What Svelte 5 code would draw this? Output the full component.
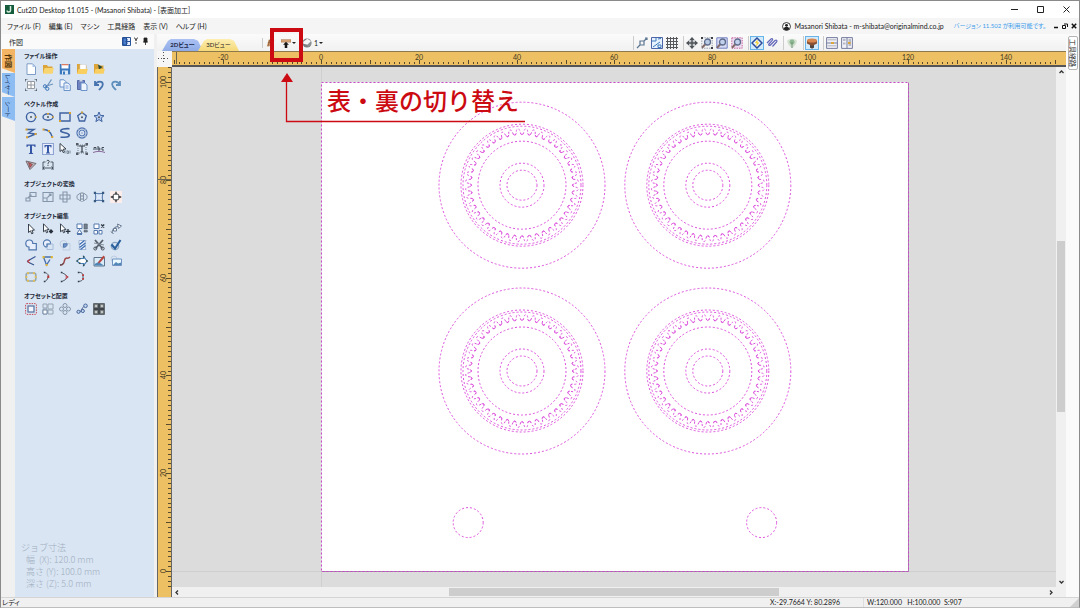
<script>
  const B = '#3f62a0';
  const D = '#26303c';
  const G = '#8696aa';
  const svg = {
    newfile: `<path d="M2 .8h5.5l3 3V11.5H2z" fill="#fcfeff" stroke="#7e9cc8"/><path d="M7.5 1v3h3z" fill="#a9c4e6"/>`,
    open: `<path d="M1 2h4l1 1.500h4.500V10H1z" fill="#dba53c"/><path d="M2.500 5H11.800L10.500 10.800H1z" fill="#f9d571"/>`,
    save: `<path d="M.8 1h10.400v10.400H.8z" fill="#3c78bd"/><path d="M2.500 1h7v4.500h-7z" fill="#fff"/><path d="M2.500 1h7v1.300h-7z" fill="#dc7c63"/><path d="M3 7.500h6V11.500H3z" fill="#dce8f4"/><path d="M4 8.500h2v3H4z" fill="#3c78bd"/>`,
    import: `<path d="M1 1h4l1 1.500h4.500V10H1z" fill="#dba53c"/><path d="M4 1.500h6v6H4z" fill="#fff" stroke="#ccc" stroke-width=".5"/><path d="M2.500 6H11.800L10.500 11H1z" fill="#f9cf62"/>`,
    importv: `<path d="M1 1h4l1 1.500h4.500V10H1z" fill="#dba53c"/><path d="M5 1.500l4.500 2.500L6 6.500z" fill="#274a39"/><path d="M2.500 6H11.800L10.500 10.800H1z" fill="#f9cf62"/>`,
    job: `<path d="M2.500 2.500h7v7h-7zM2.500 6h7M6 2.500v7" fill="#fff" stroke="#94999f"/><path d="M0 2.500V0h2.500M9.500 0H12v2.500M12 9.500V12H9.500M2.500 12H0V9.500" fill="none" stroke="#39424d" stroke-width="1.200"/>`,
    cut: `<path d="M9.500 .5L4.500 8M11 5L3 7.500" stroke="#6f94bf" stroke-width="1.300"/><circle cx="3" cy="7.300" r="1.600" fill="none" stroke="#3e76ba"/><circle cx="5.300" cy="9.800" r="1.600" fill="none" stroke="#3e76ba"/>`,
    copy: `<path d="M1 .8h4l2 2V8H1z" fill="#f4f9ff" stroke="#6c93c8"/><path d="M5 4h4l2.300 2v5.500H5z" fill="#eef5ff" stroke="#6c93c8"/><path d="M6.500 7h3M6.500 9h3" stroke="#7aa0d2"/>`,
    paste: `<path d="M1.500 1.500h7v9h-7z" fill="#6f82c2" stroke="#5369a7"/><path d="M3.500 .5h3v2h-3z" fill="#d2d8e4"/><path d="M5 4h4l2 2v5.500H5z" fill="#eef5ff" stroke="#6c93c8"/>`,
    undo: `<path d="M2 2v4h4M2.300 6C4 1.500 10 1.500 9.800 5.500C9.700 8 7.500 9 6 11" fill="none" stroke="#4774ae" stroke-width="1.800"/>`,
    redo: `<path d="M10 2v4H6M9.700 6C8 1.500 2 1.500 2.200 5.500C2.300 8 4.500 9 6 11" fill="none" stroke="#5e8ebc" stroke-width="1.800"/>`,
    circle: `<circle cx="6" cy="6" r="4.600" fill="none" stroke="${B}" stroke-width="1.400"/><circle cx="6" cy="6" r="1" fill="#4d5663"/><path d="M10 5.200h1.800v1.600H10z" fill="#d9a132"/>`,
    ellipse: `<ellipse cx="6" cy="6" rx="5" ry="3.200" fill="none" stroke="${B}" stroke-width="1.400"/><circle cx="6" cy="6" r="1" fill="#4d5663"/><path d="M5 2h2v1.500H5zM10 5.200h1.800v1.600H10z" fill="#d9a132"/>`,
    rect: `<path d="M1 2h10v8H1z" fill="none" stroke="${B}" stroke-width="1.400"/><path d="M10 1h2v2h-2zM0 9h2v2H0z" fill="#d9a132"/>`,
    polygon: `<path d="M6 1.500l4.300 3.300L8.600 10H3.400L1.700 4.800z" fill="none" stroke="${B}" stroke-width="1.300"/><circle cx="6" cy="6.200" r="1" fill="#4d5663"/><path d="M5.100 .6h1.800v1.800H5.100z" fill="#d9a132"/>`,
    star: `<path d="M6 1l1.400 3.400 3.600.3-2.800 2.300.9 3.600L6 8.600 2.900 10.600l.9-3.600L1 4.700l3.600-.3z" fill="#b7cdf0" stroke="${B}"/><circle cx="6" cy="6.200" r="1" fill="#4d5663"/>`,
    polyline: `<path d="M1.500 2.500L9 2.500L3.500 6l7 1L2.500 10.300" fill="none" stroke="${B}" stroke-width="1.400"/><path d="M.5 1.500h2v2h-2zM9.500 6h2v2h-2zM1 9.300h2v2H1z" fill="#d9a132"/>`,
    arc: `<path d="M1.500 2.500C6 2.500 9 5.500 10.300 10" fill="none" stroke="${B}" stroke-width="1.400"/><path d="M.5 1.500h2v2h-2zM6 3h2v2H6zM9.300 9h2v2h-2z" fill="#d9a132"/>`,
    curve: `<path d="M10.500 1.700C6 1.500 1.500 1.800 1.800 4c.4 2 8 1.500 8.400 4C10.500 10.500 5 10.200 1.500 10.200" fill="none" stroke="${B}" stroke-width="1.600"/>`,
    texture: `<circle cx="6" cy="6" r="5" fill="none" stroke="#5577b3" stroke-width="1.300"/><circle cx="6" cy="6" r="2.900" fill="none" stroke="#5577b3" stroke-width="1.200"/><circle cx="6" cy="6" r="1.100" fill="#5577b3"/><path d="M2 2l8 8M10 2l-8 8M1 6h10M6 1v10" stroke="#d9e5f2" stroke-width=".4"/>`,
    text: `<path d="M1.500 1.500h9v2.500H9.600L9 2.800H7v7l1.200.6v.6H3.800v-.6l1.200-.6v-7H3L2.400 4H1.500z" fill="#3656a6"/>`,
    textbox: `<path d="M.5 .5h11v11H.5z" fill="#e9effb" stroke="#3f5fae" stroke-width="1.200" stroke-dasharray="1 1"/><path d="M2.500 2h7v2.500H8.700L8.200 3.300H7v6l1 .5v.7H4v-.7l1-.5v-6H3.800l-.5 1.200H2.500z" fill="#3656a6"/>`,
    textsel: `<path d="M1 .5l6 5.500-2.800.2L5.500 9l-1.300.6L3 6.800 1 8.500z" fill="#fff" stroke="${D}" stroke-width=".9"/><path d="M6 7.500v3M8 7.500v3h1.500V8H8M11 7.500v3" fill="none" stroke="#73808e" stroke-width=".9"/>`,
    texttransform: `<path d="M2 2h8v8H2z" fill="none" stroke="#788391" stroke-dasharray="1 1"/><path d="M3 3h6M6 3v6M4.500 9h3" stroke="#353d47" stroke-width="1.200"/><path d="M0 0h2.500v2.500H0zM9.500 0H12v2.500H9.500zM0 9.500h2.500V12H0zM9.500 9.500H12V12H9.500z" fill="#535c66"/>`,
    textcurve: `<path d="M1 7V4.500h2V7M5 3v4h1.800V5H5M11 4.500H9V7h2" fill="none" stroke="#434b58"/><path d="M0 9.500C4 8 8 8 12 9.500" fill="none" stroke="#8c6a9b"/>`,
    trace: `<path d="M1 2l10 2.500L5 10.500z" fill="#b9babf" stroke="#756b70"/><path d="M3.500 3.500l4 2-2.500 3z" fill="#c15a5a" stroke="#813f46" stroke-width=".7"/>`,
    dimension: `<path d="M1 3v8M11 3v8M1 9h10M2.500 7.500L1 9l1.500 1.500M9.500 7.500L11 9l-1.500 1.500M1 3h2.500M8.500 3H11" fill="none" stroke="#414b58" stroke-width=".9"/><path d="M4.700 2c1-1.500 3.500-.3 2.200 1.200-.6.6-.9.700-.9 1.600M6 5.800v1" fill="none" stroke="#303740"/>`,
    move: `<path d="M5 1.500h6v4H5zM1 7h4v3H1zM3 7l3-3M4.200 4H6v2" fill="none" stroke="${G}" stroke-width="1.100"/>`,
    scale: `<path d="M1 1.500h10v9H1zM1 7h4v3.500M5.500 6.500L9 3M6.800 3H9v2" fill="none" stroke="${G}" stroke-width="1.100"/>`,
    rotate: `<path d="M4 1h4v10H4zM1 4h10v4H1z" fill="none" stroke="${G}" stroke-width="1.100"/>`,
    mirror: `<path d="M6 1v10" stroke="#7e8996" stroke-dasharray="2 1"/><path d="M4.500 2L1 4.500v3L4.500 10zM7.500 2L11 4.500v3L7.500 10z" fill="none" stroke="${G}"/>`,
    distort: `<path d="M2 2C5 3 7 3 10 2C9 5 9 7 10 10C7 9 5 9 2 10C3 7 3 5 2 2z" fill="#dce8fa" stroke="#496f9f"/><path d="M.8 .8h2.200V3H.8zM9 .8h2.200V3H9zM.8 9h2.200v2.200H.8zM9 9h2.200v2.200H9z" fill="#375881"/>`,
    center: `<path d="M0 0h12v12H0z" fill="#fcecea"/><circle cx="6" cy="6" r="3.300" fill="#fff" stroke="#3e4146"/><path d="M6 .8v3M6 8.200v3M.8 6h3M8.200 6h3" stroke="#303236" stroke-width="1.300"/>`,
    select: `<path d="M3.500 1v8.500l2-1.700 1.200 3 1.400-.6L6.900 7.300l2.600-.2z" fill="#fff" stroke="${D}" stroke-width=".9"/>`,
    node: `<path d="M1.500 .8v8l1.900-1.600 1.100 2.600 1.200-.5L4.700 6.800 7 6.500z" fill="#fff" stroke="${D}" stroke-width=".9"/><path d="M9 6l2.400 2.400L9 10.800 6.600 8.400z" fill="${D}"/>`,
    interactive: `<path d="M1.500 .8v8l1.900-1.600 1.100 2.600 1.200-.5L4.700 6.800 7 6.500z" fill="#fff" stroke="${D}" stroke-width=".9"/><path d="M9 6v4.800M6.600 8.400h4.800" stroke="${D}" stroke-width="1.300"/>`,
    group: `<path d="M1 1h5v4.500H1zM1 10.500l2.500-4 2.500 4zM1 11.500h5" fill="#fff" stroke="#5579ad"/><path d="M8 1h3.300v5H8zM8 7.500h3.300V9H8z" fill="#75808e" stroke="#4f5964" stroke-width=".6"/>`,
    ungroup: `<path d="M1 1h5v4.500H1zM1 7.500h3.500V11H1zM6 7.500h3V11H6z" fill="#fff" stroke="#5579ad"/><path d="M8.200 1.500l3 3M11.200 1.500l-3 3" stroke="#303a46" stroke-width="1.400"/>`,
    measure: `<path d="M2 10C2 6 4 4 9 3" fill="none" stroke="#75869a" stroke-width="1.200"/><path d="M7.500 1l4 2-3 2.500zM1 8.500l2.500 2.500M3.500 5.500h3v2.500h-3z" fill="#fff" stroke="#687b94"/>`,
    weld: `<path d="M4 8A3.500 3.500 0 1 1 7.800 4.500H11.300V10.800H4z" fill="#e8effc" stroke="#4f76ad" stroke-width="1.200"/>`,
    subtract: `<circle cx="5" cy="4.500" r="3.600" fill="#e9f0fc" stroke="#4f76ad" stroke-width="1.100"/><path d="M5 5h6v5.500H5z" fill="#d9e5f2" stroke="#a4bcda"/><path d="M5 8V5h3.500" fill="none" stroke="#4f76ad" stroke-width="1.200"/>`,
    intersect: `<circle cx="4.500" cy="5" r="3.500" fill="none" stroke="#bdcde1"/><path d="M4 4.500h7V11H4z" fill="none" stroke="#bdcde1"/><path d="M4.500 4.800H8.200C8.200 7.500 6.500 8.200 4.500 8.300z" fill="#6f94ca" stroke="#4f76ad"/>`,
    trim: `<path d="M3 1.500h7L9 4v4l1 2.500H3L3.500 8 3 4z" fill="#eef3fb" stroke="#8ba4c6" stroke-width=".7"/><path d="M3.500 5.500l5-4M3.500 8.500l6-4.500M4.500 10.500l5-4" stroke="#3f6fb3" stroke-width="1.300"/>`,
    scissors: `<path d="M2 1l7.500 8.500M10 1L2.500 9.500" stroke="#555e6a" stroke-width="1.800"/><circle cx="2.300" cy="9.500" r="1.500" fill="none" stroke="#48505b"/><circle cx="9.700" cy="9.500" r="1.500" fill="none" stroke="#48505b"/><path d="M1 4l10 2" stroke="#86909a"/>`,
    validate: `<circle cx="5" cy="7" r="3.700" fill="none" stroke="#8aa6c5" stroke-width="1.300"/><path d="M1.500 5.500l3.500 4L10.500 1" fill="none" stroke="#285f9c" stroke-width="2.100"/>`,
    fillet: `<path d="M10.500 1.500L3.500 5.500C2 6.200 2 6.500 3.500 7.200L9 10" fill="none" stroke="#365592" stroke-width="1.200"/><path d="M5 4.700C2 6 2 6.700 5 8" fill="none" stroke="#c04148" stroke-width="1.300"/>`,
    extend: `<path d="M1.500 2l3 8L8 4.500M1.500 2h8" fill="none" stroke="#476fad" stroke-width="1.300"/><path d="M.5 1h2.200v2.200H.5zM8.700 1h2.200v2.200H8.700zM3.600 9h2v2h-2z" fill="#dfb536"/>`,
    fit: `<path d="M1 10C7 10.500 4 4 7 3.200C8.500 2.800 9 4 11 2" fill="none" stroke="#9f4646" stroke-width="1.500"/><path d="M1 10c2 0 3-1 3.500-2" fill="none" stroke="#454c57"/>`,
    offsetshape: `<path d="M3.500 3.500h4V1.500L11 6l-3.500 4.500V8.500h-4L1 6z" fill="#fff" stroke="#477fb6" stroke-width="1.200"/><path d="M3 3h1.500v1.500H3zM3 7.500h1.500V9H3zM7 1h1.500v1.500H7zM7 9.500h1.500V11H7zM10 5.300h1.800v1.500H10zM.5 5.300h1.500v1.500H.5z" fill="#39514b"/>`,
    bitmap: `<path d="M1 2.500h10.500v8.500H1z" fill="#d9ecf8" stroke="#60758b"/><path d="M1.500 9l4-2 5.500 3.500H1.500z" fill="#4e86b8"/><path d="M10.500 .5L5.500 6.500l-.5 2 2-.8L12 2z" fill="#b8443f"/>`,
    crop: `<circle cx="4" cy="4" r="3" fill="none" stroke="#bccde1"/><path d="M2.500 4h9v6.500h-9z" fill="#e9f7ff" stroke="#6f92c1"/><path d="M3 10l3-3 2 1.500 3-1V10z" fill="#5187b8"/>`,
    boundary: `<rect x="1.200" y="2" width="9.600" height="8" rx="2" fill="none" stroke="#93a8b1" stroke-width="1.600"/><path d="M2 1.300h2v2H2zM8 1.300h2v2H8zM2 8.700h2v2H2zM8 8.700h2v2H8zM.3 5h2v2h-2zM9.700 5h2v2h-2z" fill="#e0bc5b"/>`,
    join1: `<path d="M2.500 1.500C6 2.500 7 4 6 6.500 5.500 8.500 4.500 9.800 2.500 10.500" fill="none" stroke="#4d5666"/><path d="M5.300 4.500h2V7h-2z" fill="#bb3838"/><path d="M1.800 .8h1.500v1.500H1.800zM1.800 9.700h1.500v1.500H1.800z" fill="#343c49"/>`,
    join2: `<path d="M2.500 1.500C6 3 8.500 5 8.500 6S6 9.500 2.500 10.500" fill="none" stroke="#4d5666"/><path d="M6.500 4.500l2.200 1.500-2.200 1.500" fill="none" stroke="#c24650" stroke-width="1.300"/><path d="M1.800 .8h1.500v1.500H1.800zM1.800 9.700h1.500v1.500H1.800z" fill="#343c49"/>`,
    join3: `<path d="M2.500 1.500C6 1 7 3 7 5V7C7 9 6 10 2.500 10.500" fill="none" stroke="#4d5666"/><path d="M6.200 3.300h1.800v1.800H6.200zM6.200 7h1.800v1.800H6.200z" fill="#c03939"/><path d="M1.800 .8h1.500v1.500H1.800zM1.800 9.700h1.500v1.500H1.800z" fill="#343c49"/>`,
    offset: `<rect x=".6" y=".6" width="10.800" height="10.800" rx="1" fill="none" stroke="#c64b59" stroke-dasharray="1.500 1"/><rect x="3" y="3" width="6" height="6" fill="#f4f6fd" stroke="#536f9e" stroke-width="1.200"/>`,
    array: `<path d="M1 1h4v4H1zM6 1h5v5H6zM1 6h4v5H1zM6 7h5v4H6z" fill="none" stroke="#96a5b4"/><path d="M1 7h4v4H1z" fill="#fff" stroke="#758ca8"/>`,
    circular: `<circle cx="6" cy="2.500" r="2" fill="none" stroke="${G}"/><circle cx="6" cy="9.500" r="2" fill="none" stroke="${G}"/><circle cx="2.500" cy="6" r="2" fill="none" stroke="${G}"/><circle cx="9.500" cy="6" r="2" fill="none" stroke="${G}"/>`,
    along: `<path d="M1 9.500C6 11 4 5 10 2" fill="none" stroke="#465d88"/><circle cx="2.500" cy="8.800" r="1.600" fill="#c3d4ee" stroke="#48699e"/><circle cx="6.800" cy="8" r="1.600" fill="#c3d4ee" stroke="#48699e"/><circle cx="9.500" cy="2.800" r="1.800" fill="#c3d4ee" stroke="#48699e"/>`,
    nest: `<path d="M.8 .8h4.600v4.600H.8zM6.600 .8h4.600v4.600H6.600zM.8 6.600h4.600v4.600H.8zM6.600 6.600h4.600v4.600H6.600z" fill="#8c928e" stroke="#3f454b" stroke-width="1.100"/><path d="M2.300 2.300h1.500v1.500H2.300zM8.200 2.300h1.500v1.500H8.200zM2.300 8.200h1.500v1.500H2.300zM8.200 8.200h1.500v1.500H8.200z" fill="#ecefee"/>`,
    wood: `<path d="M3 2h7L8 10H1z" fill="#d09a6c"/><path d="M4.500 2L2.500 10M7.500 2L5.500 10M2.500 5.500H9" stroke="#855b3b"/>`,
    flip: `<path d="M0 2h12v3H0z" fill="#d8a777" stroke="#a26b43" stroke-width=".6"/><path d="M6 4.500L9.500 8H7.500v4h-3V8h-2z" fill="#171717"/>`,
    ball: `<circle cx="6" cy="6" r="5.500" fill="#7b7d80"/><path d="M1.500 4.500L6.500 1l4.500 3-4 4-5.500-1z" fill="#f4f4f4"/><path d="M6.500 8l4.300-4v4.500L7 11z" fill="#8d9093"/>`,
    snap: `<path d="M4 4h4v4H4zM1 11l3-3M8 4l3-3M9 1h2v2" fill="none" stroke="#5c7590" stroke-width="1.200"/>`,
    snapgeo: `<path d="M.5 .5h11v11H.5z" fill="#e8f2ff" stroke="#4c65a9"/><path d="M1 4h4V1M7 2l3-.5M2 10l7-5M7 8h3v2.500H7z" fill="none" stroke="#3e7bbb"/>`,
    grid: `<path d="M1.500 0v12M4.500 0v12M7.500 0v12M10.500 0v12M0 1.500h12M0 4.500h12M0 7.500h12M0 10.500h12" stroke="#55585d"/>`,
    pan: `<path d="M6 .3L11.700 6 6 11.700.3 6z" fill="#c9ccce"/><path d="M6 0l2.500 3H6.700V5.300H9V3.500L12 6 9 8.500V6.700H6.700V9H8.500L6 12 3.500 9h1.800V6.700H3V8.500L0 6l3-2.500v1.800h2.300V3H3.500z" fill="#4d5358"/>`,
    zoombox: `<path d="M.8 .8h10.400v10.400H.8z" fill="none" stroke="#98a1ae" stroke-dasharray="1.500 1"/><circle cx="6.500" cy="5" r="3" fill="#b9cae4" stroke="#5e6c8d" stroke-width="1.300"/><path d="M4 7.500L1 10.800" stroke="#826a68" stroke-width="2"/><path d="M0 0h2v2H0zM10 0h2v2h-2zM10 10h2v2h-2z" fill="#3d4248"/>`,
    zoomjob: `<path d="M.8 .8h10.400v10.400H.8z" fill="#d8dcf4" stroke="#7480c2"/><circle cx="6.500" cy="5" r="3" fill="#c2d0eb" stroke="#5e6c8d" stroke-width="1.300"/><path d="M4 7.500L1 10.800" stroke="#826a68" stroke-width="2"/>`,
    zoomsel: `<path d="M.8 .8h10.400v10.400H.8z" fill="#eddcf0" stroke="#c467a6" stroke-dasharray="1.500 1"/><circle cx="6.500" cy="5" r="3" fill="#c2d0eb" stroke="#5e6c8d" stroke-width="1.300"/><path d="M4 7.500L1 10.800" stroke="#826a68" stroke-width="2"/>`,
    vectors: `<path d="M6 1l5 5-5 5-5-5z" fill="#eaf4fd" stroke="#2c4c9d" stroke-width="1.500"/><path d="M6.500 2.500L4 6h1.800L5 9.500 8.300 5.500H6.500z" fill="#f5cf2a"/>`,
    toolpaths: `<path d="M1 6l4-4c1.500-1 2.200.5 1 1.700L3 7c-1 1.200.5 2 1.500 1L9 3.500c1.500-1 2.500.3 1.500 1.500L6.500 9.500" fill="none" stroke="#6268b9" stroke-width="1.200"/>`,
    plant: `<path d="M1 4c2-3 8-3 10 0-1 4-3 6-5 7-2-1-4-3-5-7z" fill="#d3e1d1"/><circle cx="6" cy="5" r="2.500" fill="#8db892"/><path d="M6 5v6" stroke="#6e9174"/>`,
    material: `<path d="M1 3.500v3L4 8v2.500l2 1 2-1V8l3-1.500v-3z" fill="#8a5034"/><ellipse cx="6" cy="3.500" rx="5" ry="2" fill="#d9854f"/><path d="M4 8l2 .8L8 8v2.500l-2 1-2-1z" fill="#4f4540"/>`,
    tilesh: `<path d="M.6 .6h10.800v10.800H.6zM.6 6h10.800" fill="#f0f1f8" stroke="#777e9f"/><path d="M1.500 2h9v1.500h-9zM1.500 8h9v1.500h-9z" fill="#c3c5cf"/><path d="M5 5h3v2H5z" fill="#d9a637"/>`,
    tilesv: `<path d="M.6 .6h10.800v10.800H.6zM6 .6v10.800" fill="#f0f1f8" stroke="#777e9f"/><path d="M2 2h2.500v2H2zM2 5.500h2.500v2H2zM7.500 2H10v7H7.500z" fill="#b6b9c5"/><path d="M7 5h2.500v2H7z" fill="#d9a637"/>`,
  };

  const sections = [
    { title: 'ファイル操作', rows: [['newfile', 'open', 'save', 'import', 'importv'], ['job', 'cut', 'copy', 'paste', 'undo', 'redo']] },
    { title: 'ベクトル作成', rows: [['circle', 'ellipse', 'rect', 'polygon', 'star'], ['polyline', 'arc', 'curve', 'texture'], ['text', 'textbox', 'textsel', 'texttransform', 'textcurve'], ['trace', 'dimension']] },
    { title: 'オブジェクトの変換', rows: [['move', 'scale', 'rotate', 'mirror', 'distort', 'center']] },
    { title: 'オブジェクト編集', rows: [['select', 'node', 'interactive', 'group', 'ungroup', 'measure'], ['weld', 'subtract', 'intersect', 'trim', 'scissors', 'validate'], ['fillet', 'extend', 'fit', 'offsetshape', 'bitmap', 'crop'], ['boundary', 'join1', 'join2', 'join3']] },
    { title: 'オフセットと配置', rows: [['offset', 'array', 'circular', 'along', 'nest']] },
  ];
  const viewGroups = [
    ['snap', 'snapgeo', 'grid'],
    ['pan', 'zoombox', 'zoomjob', 'zoomsel'],
    ['vectors', 'toolpaths'],
    ['plant'],
    ['material'],
    ['tilesh', 'tilesv'],
  ];
  const pressed = new Set(['vectors', 'material']);
  const menus = ['ファイル (F)', '編集 (E)', 'マシン', '工具経路', '表示 (V)', 'ヘルプ (H)'];

  // Drawing area: millimetres to canvas pixels, origin of the job at (ox, oy).
  const scale = 4.89;
  const ox = 149.5;
  const oy = 504.5;
  const range = (a, b) => Array.from({ length: b - a + 1 }, (_, i) => a + i);
  const xTicks = range(-30, 150);
  const yTicks = range(-3, 103);
  const px = (v) => Math.round(ox + v * scale - 0.5);
  const py = (v) => Math.round(oy - v * scale - 0.5);

  const gears = [[41, 79], [79, 79], [41, 41], [79, 41]];
  const holes = [[30, 10], [90, 10]];
  const polar = (r, a) => `${(r * Math.cos(a)).toFixed(2)} ${(r * Math.sin(a)).toFixed(2)}`;
  function toothPath(count, inner, outer) {
    const step = (Math.PI * 2) / count;
    let d = `M${polar(inner, 0)}`;
    for (let i = 0; i < count; i++) {
      const a = i * step;
      d += `C${polar(inner, a + step * 0.35)} ${polar(outer, a + step * 0.15)} ${polar(outer, a + step * 0.5)}`;
      d += `C${polar(outer, a + step * 0.85)} ${polar(inner, a + step * 0.65)} ${polar(inner, a + step)}`;
    }
    return d + 'Z';
  }
  function rootPath(count, r) {
    const step = (Math.PI * 2) / count;
    let d = '';
    for (let i = 0; i < count; i++) {
      const a = i * step;
      d += `M${polar(r + 1.5, a - step * 0.22)}Q${polar(r - 1.5, a)} ${polar(r + 1.5, a + step * 0.22)}`;
    }
    return d;
  }
  const teeth = toothPath(44, 50.5, 56.5);
  const roots = rootPath(44, 50.5);
</script>

{#snippet icon(name, size = 12)}
  <svg class="icon" width={size} height={size} viewBox="0 0 12 12" aria-hidden="true">{@html svg[name]}</svg>
{/snippet}

<div class="app">
  <header class="title">
    <svg width="9" height="9" viewBox="0 0 9 9" aria-hidden="true"><path d="M0 0h9v9H0z" fill="#145c3c" /><path d="M5.500 1v4.500C5.500 7.500 2 7.500 2 5.500" fill="none" stroke="#d8eee2" stroke-width="1.500" /></svg>
    <span>Cut2D Desktop 11.015 - (Masanori Shibata) - [表面加工]</span>
    <div class="winctl">
      <button aria-label="最小化"><svg width="7" height="7"><path d="M0 3.500h7" stroke="#222" /></svg></button>
      <button aria-label="最大化"><svg width="7" height="7"><path d="M.5 .5h6v6h-6z" fill="none" stroke="#222" /></svg></button>
      <button aria-label="閉じる"><svg width="7" height="7"><path d="M.5 .5l6 6M6.500 .5l-6 6" stroke="#222" /></svg></button>
    </div>
  </header>

  <nav class="menu">
    {#each menus as m}<button>{m}</button>{/each}
    <div class="account">
      <svg width="9" height="9" viewBox="0 0 10 10" aria-hidden="true"><circle cx="5" cy="5" r="4.400" fill="#fff" stroke="#222" /><circle cx="5" cy="3.700" r="1.600" fill="#222" /><path d="M2 8c0-3.500 6-3.500 6 0-2 1.500-4 1.500-6 0z" fill="#222" /></svg>
      <span>Masanori Shibata - m-shibata@originalmind.co.jp</span>
      <a href="#update">バージョン 11.502 が利用可能です。</a>
      <div class="mdi">
        <button aria-label="子最小化"><svg width="6" height="6"><path d="M1 4.500h4" stroke="#111" stroke-width="1.500" /></svg></button>
        <button aria-label="子復元"><svg width="6" height="6"><path d="M2 1h3.500v3M.5 2.500h3v3h-3z" fill="none" stroke="#111" /></svg></button>
        <button aria-label="子閉じる"><svg width="6" height="6"><path d="M.8 .8l4.400 4.400M5.200 .8L.8 5.200" stroke="#111" stroke-width="1.500" /></svg></button>
      </div>
    </div>
  </nav>

  <div class="body">
    <aside class="side">
      <div class="sidehead">
        <span>作図</span>
        <svg width="28" height="9" viewBox="0 0 28 9" aria-hidden="true"><path d="M.5 .5h8v8h-8z" fill="#e6efff" stroke="#29549b" /><path d="M1 1h3.500v7H1zM8 4.500H4M5.500 2.500l-2 2 2 2" fill="#4a7fd0" stroke="#234c91" /><path d="M12 1h1l1 3 1-3h1M14 5v2" fill="none" stroke="#555" /><path d="M22 1h3v4h-3zM21 5h5M23.500 5v3" fill="#222" stroke="#222" stroke-width=".8" /></svg>
      </div>
      <div class="sidebody">
        <div class="tabs">
          <button class="vt on">作図</button>
          <button class="vt">レイヤー</button>
          <button class="vt">シート</button>
        </div>
        <div class="panel">
          {#each sections as s}
            <section>
              <h2>{s.title}</h2>
              {#each s.rows as row}
                <div class="row">
                  {#each row as name}<button class="tool" aria-label={name}>{@render icon(name)}</button>{/each}
                </div>
              {/each}
            </section>
          {/each}
          <dl class="job">
            <dt>ジョブ寸法</dt>
            <dd>幅&nbsp; (X): 120.0 mm</dd>
            <dd>高さ (Y): 100.0 mm</dd>
            <dd>深さ (Z): 5.0 mm</dd>
          </dl>
        </div>
      </div>
    </aside>

    <main>
      <div class="bar">
        <button class="view v2">2Dビュー</button>
        <button class="view v3">3Dビュー</button>
        <div class="sides">
          <button class="tool" aria-label="両面">{@render icon('wood', 10)}</button>
          <div class="flip">
            <button class="tool" aria-label="面切替">{@render icon('flip', 10)}</button>
            <i class="caret"></i>
            <div class="callout">
              <div class="frame"></div>
              <svg width="246" height="52" aria-hidden="true"><path d="M7 0l6 9H1z" fill="#cc0a12" /><path d="M6.500 8v40.500H245" fill="none" stroke="#cc0a12" stroke-width="1.300" /></svg>
              <strong>表・裏の切り替え</strong>
            </div>
          </div>
          <button class="tool" aria-label="シート">{@render icon('ball', 10)}</button>
          <span class="num">1</span><i class="caret"></i>
        </div>
        <div class="views">
          {#each viewGroups as g}
            <div class="vg">
              {#each g as name}<button class="tool" class:pressed={pressed.has(name)} aria-label={name}>{@render icon(name)}</button>{/each}
            </div>
          {/each}
        </div>
      </div>

      <div class="stage">
        <div class="corner"><svg width="14" height="14"><path d="M6.500 1v12M1 7.500h12" stroke="#555" stroke-dasharray="1 2" /></svg></div>
        <div class="ruler top">
          <svg width="100%" height="100%">
            {#each xTicks as t}
              <path d={`M${px(t) + 0.5} 12V${t % 10 === 0 ? 8 : 10}`} stroke="#574a2d" />
              {#if t % 20 === 0}<text x={px(t)} y="8" text-anchor="middle">{t}</text>{/if}
            {/each}
            <path d="M4.500 0v12" stroke="#6c6550" />
          </svg>
        </div>
        <div class="ruler left">
          <svg width="100%" height="100%">
            {#each yTicks as t}
              <path d={`M13 ${py(t) + 0.5}H${t % 10 === 0 ? 8 : 10}`} stroke="#574a2d" />
              {#if t % 20 === 0}<text transform={`translate(8 ${py(t)}) rotate(-90)`} text-anchor="middle">{t}</text>{/if}
            {/each}
            <path d="M0 112.500h13" stroke="#6c6550" />
          </svg>
        </div>
        <div class="canvas">
          <svg width="100%" height="100%">
            <path d={`M${ox} 0V2000M0 ${oy}H3000`} stroke="#cfcfcf" />
            <rect x={ox} y={oy - 489} width="587" height="489" fill="#fff" />
            <path d={`M${ox} ${oy}H736.500V15.500`} fill="none" stroke="#a58aa8" />
            <g fill="none" stroke="#dd50dd" stroke-dasharray="2 2" stroke-width="1">
              <rect x={ox} y={oy - 489} width="587" height="489" stroke="#c844c8" />
              {#each gears as [x, y]}
                <g transform={`translate(${ox + x * scale} ${oy - y * scale})`}>
                  <circle r="83" /><circle r="61" /><circle r="59" />
                  <path d={teeth} />
                  <path d={roots} stroke-dasharray="none" />
                  <circle r="44" /><circle r="22" /><circle r="15" />
                </g>
              {/each}
              {#each holes as [x, y]}<circle cx={ox + x * scale} cy={oy - y * scale} r="15" />{/each}
            </g>
          </svg>
        </div>
        <div class="vs">
          <svg width="7" height="7"><path d="M1.500 5l2-2 2 2" fill="none" stroke="#333" stroke-width="1.300" /></svg>
          <div class="track"><i></i></div>
          <svg width="7" height="7"><path d="M1.500 2l2 2 2-2" fill="none" stroke="#333" stroke-width="1.300" /></svg>
        </div>
        <div class="hs">
          <svg width="7" height="7"><path d="M5 1.500l-2 2 2 2" fill="none" stroke="#333" stroke-width="1.300" /></svg>
          <div class="track"><i></i></div>
          <svg width="7" height="7"><path d="M2 1.500l2 2-2 2" fill="none" stroke="#333" stroke-width="1.300" /></svg>
        </div>
      </div>
    </main>
    <aside class="rail"><button>工具経路</button></aside>
  </div>

  <footer>
    <span class="ready">レディ</span>
    <span class="xy">X:-29.7664 Y: 80.2896</span>
    <span class="dim">W:120.000 &nbsp; H:100.000 &nbsp;S:907</span>
    <svg width="9" height="9"><path d="M9 0v9H0z" fill="#d0d0d0" /></svg>
  </footer>
</div>

<style>
  :global(body) { margin: 0; }
  .app {
    box-sizing: border-box;
    height: 100vh;
    display: flex;
    flex-direction: column;
    border: 1px solid #8a8a8a;
    border-bottom-color: #bdbdbd;
    background: #f0f0f0;
    color: #222;
    font: 7px/10px Lato, "Noto Sans CJK JP", sans-serif;
    font-feature-settings: "palt";
    overflow: hidden;
  }
  button {
    margin: 0;
    padding: 0;
    border: 0;
    background: none;
    font: inherit;
    color: inherit;
    white-space: nowrap;
    font-feature-settings: inherit;
  }
  svg { display: block; flex: none; }
  .title { height: 17px; display: flex; align-items: center; gap: 3px; padding: 0 9px 0 4px; background: #fff; }
  .winctl { margin-left: auto; display: flex; gap: 19px; }
  .menu { height: 16px; display: flex; align-items: center; gap: 8px; padding: 0 2px 0 6px; background: #f5f5f5; }
  .account { margin-left: auto; display: flex; align-items: center; gap: 3px; white-space: nowrap; }
  .account a { color: #3b9cec; text-decoration: none; margin-left: 7px; font-size: 6px; }
  .mdi { display: flex; gap: 3px; margin-left: 4px; }
  .body { flex: 1; min-height: 0; display: flex; }
  .side { width: 153px; display: flex; flex-direction: column; }
  .sidehead { height: 15px; display: flex; align-items: center; justify-content: space-between; padding: 0 4px 0 8px; background: #fafafa; }
  .sidebody { flex: 1; min-height: 0; display: flex; }
  .tabs { width: 14px; display: flex; flex-direction: column; align-items: flex-end; }
  .vt {
    width: 13px;
    height: 24px;
    writing-mode: vertical-rl;
    text-orientation: sideways;
    font-size: 6px;
    line-height: 13px;
    background: #8dbcf3;
    clip-path: polygon(0 0, 100% 0, 100% 100%, 0 80%);
    color: #16345c;
  }
  .vt.on { background: #f3b564; color: #4e3206; font-size: 7px; font-weight: 700; }
  .panel { flex: 1; background: #d9e5f2; display: flex; flex-direction: column; padding: 1px 0 7px 9px; }
  section { margin-bottom: 5px; }
  h2 { margin: 0; font-size: 6px; line-height: 11px; font-weight: 700; color: #1f2a3a; }
  .row { display: flex; gap: 3px; height: 16px; align-items: center; }
  .row .tool { width: 14px; height: 14px; }
  .tool { display: grid; place-items: center; }
  .job { margin: auto 0 0; font: 9px/12px "Noto Sans CJK JP", sans-serif; color: #9fadbf; font-weight: 300; }
  .job dt { margin-left: -3px; }
  .job dd { margin: 0 0 0 2px; }
  main { flex: 1; min-width: 0; display: flex; flex-direction: column; padding-left: 3px; }
  .bar { height: 17px; display: flex; align-items: flex-end; background: linear-gradient(#fbfbfb, #f1f1f1); padding-left: 5px; }
  .view { height: 12px; width: 41px; font-size: 6px; line-height: 12px; clip-path: polygon(0 100%, 6px 14%, 9px 0, 32px 0, 36px 14%, 100% 100%); }
  .v2 { background: linear-gradient(#abc1f4, #8fabe6); font-weight: 700; color: #1c2947; }
  .v3 { background: linear-gradient(#fdeeb0, #f5d878); margin-left: -5px; }
  .sides { align-self: center; display: flex; align-items: center; margin-left: 23px; padding-left: 3px; border-left: 1px solid #ccc; }
  .flip { position: relative; display: flex; align-items: center; gap: 1px; margin: 0 6px 0 5px; }
  .caret { width: 0; height: 0; border: 2px solid transparent; border-top-color: #222; border-bottom: 0; }
  .num { margin: 0 1px 0 2px; }
  .callout { position: absolute; left: -11px; top: -10px; z-index: 2; pointer-events: none; }
  .frame { width: 25px; height: 26px; border: 4px solid #cc0a12; }
  .callout svg { margin: 11px 0 0 10px; }
  .callout strong { position: absolute; left: 57px; top: 54px; font: 500 24px/36px "Noto Sans CJK JP", sans-serif; font-feature-settings: normal; color: #cc0a12; white-space: nowrap; }
  .views { align-self: center; margin-left: auto; margin-right: 212px; display: flex; gap: 4px; }
  .vg { display: flex; gap: 1px; padding-left: 1px; border-left: 1px solid #ccc; }
  .vg .tool { width: 14px; height: 14px; }
  .tool.pressed { background: #d3eafa; box-shadow: inset 0 0 0 1px #69b4e8; }
  .stage { flex: 1; min-height: 0; display: grid; grid-template-columns: 15px 1fr 10px; grid-template-rows: 16px 1fr 10px; }
  .corner { background: #f6f6f6; }
  .ruler { background: #edc063; box-sizing: border-box; overflow: hidden; }
  .ruler text { font: 7px Lato, sans-serif; fill: #41381f; }
  .ruler.top { grid-column: 2 / 4; border: 1px solid #8c7a4d; border-width: 1px 0 2px 0; border-bottom-color: #555; }
  .ruler.left { grid-column: 1; grid-row: 2 / 4; border: solid #666; border-width: 0 1px; }
  .canvas { background: #dcdcdc; overflow: hidden; min-width: 0; min-height: 0; }
  .vs { display: flex; flex-direction: column; align-items: center; padding: 1px 0; }
  .hs { grid-column: 2; display: flex; align-items: center; padding: 0 1px; }
  .vs .track { flex: 1; width: 8px; display: flex; flex-direction: column; }
  .hs .track { flex: 1; height: 8px; display: flex; }
  .track i { background: #cdcdcd; }
  .vs .track i { margin-top: 166px; height: 34%; }
  .hs .track i { margin-left: 31%; width: 38%; }
  .rail { width: 13px; background: #fafafa; }
  .rail button { margin: 2px 0 0 2px; width: 10px; padding: 2px 0; writing-mode: vertical-rl; text-orientation: sideways; line-height: 8px; border: 1px solid #b5b5b5; border-radius: 2px; background: #fff; }
  footer { height: 9px; display: flex; align-items: center; border-top: 1px solid #d5d5d5; line-height: 9px; white-space: nowrap; }
  .ready { flex: 1; padding-left: 1px; }
  .xy { width: 93px; }
  .dim { width: 203px; padding-left: 3px; border-left: 1px solid #ddd; }
</style>
